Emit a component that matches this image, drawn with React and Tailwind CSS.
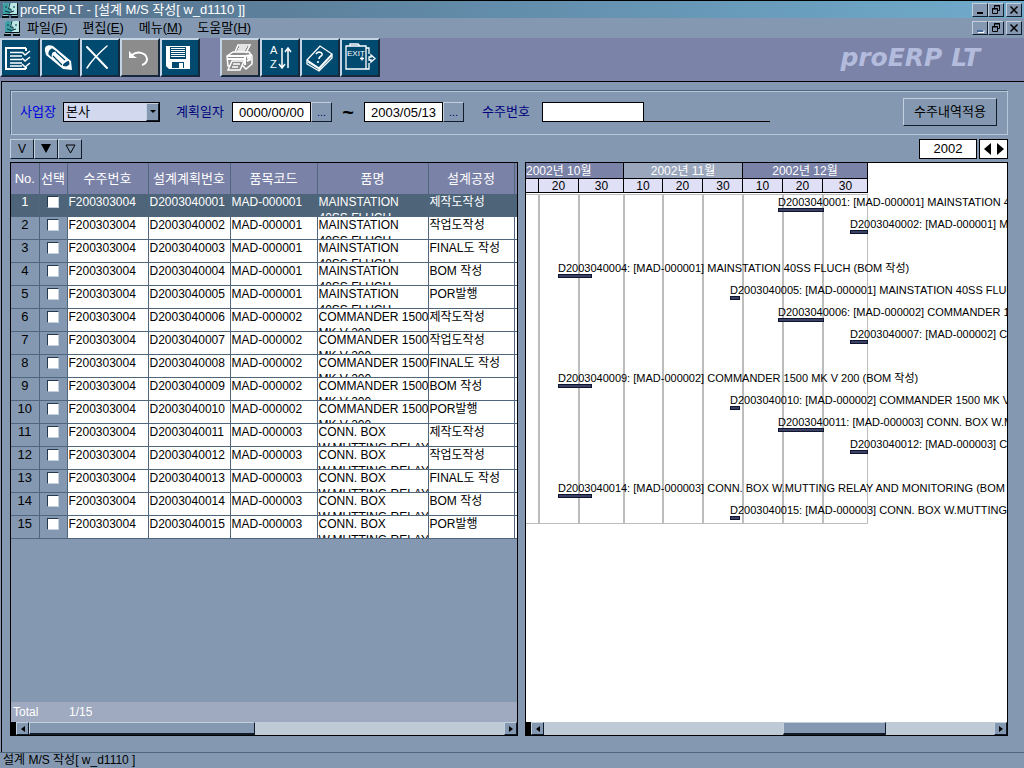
import React from 'react';

const processes = ['제작도작성', '작업도작성', 'FINAL도 작성', 'BOM 작성', 'POR발행'];

const items = [
  { code: 'MAD-000001', name: ['MAINSTATION', '40SS FLUCH'] },
  { code: 'MAD-000002', name: ['COMMANDER 1500', 'MK V 200'] },
  { code: 'MAD-000003', name: ['CONN. BOX', 'W.MUTTING RELAY', 'AND MONITORING'] },
];

// offset and length of a plan bar by process; FINAL has no bar
const bars = [
  { start: 252, width: 46 },
  { start: 324, width: 18 },
  null,
  { start: 32, width: 34 },
  { start: 204, width: 10 },
];

const rows = items.flatMap((item, i) =>
  processes.map((process, j) => {
    const no = i * 5 + j + 1;
    return { no, order: 'F200303004', plan: 'D20030400' + String(no).padStart(2, '0'), ...item, process, bar: bars[j] };
  })
);

const columns = ['No.', '선택', '수주번호', '설계계획번호', '품목코드', '품명', '설계공정'];

const months = [
  { label: '2002년 10월', style: 'w-[98px] bg-[#7a82a8] text-left', days: [['', 'w-[13px]'], ['20', 'w-[40px]'], ['30', 'w-[45px]']] },
  { label: '2002년 11월', style: 'w-[119px] bg-[#9aa6bb] text-center', days: [['10', 'w-[39px]'], ['20', 'w-[40px]'], ['30', 'w-[40px]']] },
  { label: '2002년 12월', style: 'w-[125px] bg-[#7a82a8] text-center', days: [['10', 'w-[40px]'], ['20', 'w-[40px]'], ['30', 'w-[45px]']] },
];

const raised = 'border border-t-[#c3d0de] border-l-[#c3d0de] border-r-[#101c2c] border-b-[#101c2c] bg-[#8499b1]';

// --- Icons ---
const AppIcon = () => (
  <svg width="16" height="16" viewBox="0 0 16 16" className="shrink-0" aria-hidden="true">
    <path d="M1 1h14v11H1z" fill="#b9e6e6" />
    <path d="M1 12V2l1-1h5L6 7h2v5z" fill="#3f9fa6" />
    <path d="M8 1L6.500 7H9v3M4 4v2M12 4v2M3 9q5 3 9 0" fill="none" stroke="#06323b" />
    <path d="M15.500 1v11.500H1" fill="none" stroke="#0b1014" />
    <path d="M0 14h7v2H0zM9 14h7v2H9z" fill="#0b1014" />
    <path d="M1 13.500h5M10 13.500h5" stroke="#8fc9cc" />
  </svg>
);

const icons = {
  list: (
    <g fill="none" stroke="white" strokeWidth="2">
      <path d="M24 8H4v21h20" />
      <path d="M24 8v3M24 27v2" />
      <path d="M8 12.500h12M8 16h12M8 19.500h12M8 23h12M8 26h12" strokeWidth="1.5" />
      <path d="M20 12l3 3 5-4M20 18l3 3 5-4M20 24l3 3 5-4" strokeWidth="1.5" />
    </g>
  ),
  pencil: (
    <g>
      <path d="M3 11c-1-5 3-7 8-5l18 15 1 9-9-1L4 15z" fill="white" />
      <path d="M10 9c-2 1-3 3-3 5l2 2c0-3 1-5 4-5zM14 12l9 8M11 16l9 9" fill="#004a70" stroke="#004a70" strokeWidth="1.3" />
      <path d="M21 26c0-3 2-3 3-4s2-1 3-1l1 6z" fill="#004a70" />
      <path d="M24 27l5 2-1-5z" fill="white" />
    </g>
  ),
  remove: (
    <g fill="none" stroke="white" strokeLinecap="round">
      <path d="M5 7l20 21" strokeWidth="2" />
      <path d="M25 6C17 13 10 20 5 28" strokeWidth="1.5" />
    </g>
  ),
  undo: (
    <g>
      <path d="M10 15c5-4 14-3 15 4 0 3-2 5-5 6" fill="none" stroke="white" strokeWidth="2" />
      <path d="M7 11v7h8l-3-2z" fill="white" />
    </g>
  ),
  save: (
    <g>
      <path d="M4 6h24v23H7l-3-3z" fill="white" />
      <path d="M8 7h16v12H8zM10 22h12v6H10z" fill="#004a70" />
      <path d="M9 8h14v1H9zM9 10h14v1H9zM9 12h14v1H9zM9 14h14v1H9zM9 16h14v1H9zM17 23h4v5h-4z" fill="white" />
    </g>
  ),
  print: (
    <g fill="none" stroke="white" strokeWidth="1.5">
      <path d="M13 12l3-7h12l-4 8M17 7h8M16 9h8M15 11h8" />
      <path d="M5 16l6-4h16l3 4v8l-6 5-3-3H6z" />
      <path d="M5 16h18l7-1M23 16v9M6 19h17M25 18l4-1M25 21l4-2" strokeWidth="2" />
      <path d="M10 21h12l-4 9H6z" fill="#8c8c8c" />
      <path d="M11 24h7M10 27h6" />
    </g>
  ),
  sort: (
    <g fill="none" stroke="white" strokeWidth="1.5">
      <text x="8" y="14" fill="white" stroke="none" fontSize="11" fontFamily="Liberation Sans, sans-serif">A</text>
      <text x="8" y="28" fill="white" stroke="none" fontSize="11" fontFamily="Liberation Sans, sans-serif">Z</text>
      <path d="M20 8v20M17 24l3 4 3-4M26 28V8M23 12l3-4 3 4" />
    </g>
  ),
  help: (
    <g fill="none" stroke="white" strokeWidth="1.3">
      <path d="M5 20L18 6l12 8-13 14zM5 20v4l12 7 13-13v-4M17 28v3M6 22l11 7 12-13" />
      <path d="M14 14c2-3 7-2 6 1-1 2-3 1-3 4M16 21v2" strokeWidth="1.6" />
    </g>
  ),
  exit: (
    <g fill="none" stroke="white" strokeWidth="1.3">
      <path d="M4 6h20v23H4zM8 6V4h8l2 2M24 8h3v6M27 23v6h-3" />
      <text x="5" y="16" fill="white" stroke="none" fontSize="8" fontFamily="Liberation Sans, sans-serif">EXIT</text>
      <path d="M18 18.500h4M20 16.500v4M27 17h2v-2l4 3.500-4 3.500v-2h-2z" />
    </g>
  ),
};

const ToolButton = ({ icon, label, disabled }) => (
  <button
    type="button"
    aria-label={label}
    className={
      'flex h-[39px] w-10 items-center justify-center border-2 border-t-[#c3d4e4] border-l-[#c3d4e4] border-r-[#16283c] border-b-[#16283c] ' +
      (disabled ? 'bg-[#8c8c8c]' : 'bg-[#004a70]')
    }
  >
    <svg width="36" height="35" viewBox="0 0 36 35" aria-hidden="true">{icons[icon]}</svg>
  </button>
);

const WindowButtons = ({ dim }) => (
  <div className="ml-auto flex pr-0.5">
    <button type="button" aria-label="Minimize" className={`flex h-3.5 w-4 items-center justify-center ${raised}`}>
      <svg width="12" height="12" viewBox="0 0 12 12">
        <path d="M3 9h6" stroke={dim ? '#4d6c9a' : 'black'} strokeWidth="2" />
        {dim && <path d="M4 10.500h6v-2" stroke="white" fill="none" />}
      </svg>
    </button>
    <button type="button" aria-label="Restore" className={`flex h-3.5 w-4 items-center justify-center ${raised}`}>
      <svg width="12" height="12" viewBox="0 0 12 12" fill="none" stroke="black">
        <path d="M4.500 4V1.500h5v5H8M4 2h6M2.500 4.500h5v5h-5zM2 5h6" />
      </svg>
    </button>
    <button type="button" aria-label="Close" className={`ml-0.5 flex h-3.5 w-4 items-center justify-center ${raised}`}>
      <svg width="12" height="12" viewBox="0 0 12 12">
        <path d="M2.500 2.500l7 7M9.500 2.500l-7 7" stroke="black" strokeWidth="1.5" />
      </svg>
    </button>
  </div>
);

const ScrollBar = ({ thumb }) => (
  <div className="flex h-[13px] bg-black pl-[5px]">
    <button type="button" aria-label="Scroll left" className={`flex w-[13px] items-center justify-center ${raised}`}>
      <svg width="4" height="6" viewBox="0 0 4 6"><path d="M4 0v6L0 3z" /></svg>
    </button>
    <div className="flex-1 bg-[#bfcad7]">
      <div className={`h-full border-b-2 ${raised} ${thumb}`} />
    </div>
    <button type="button" aria-label="Scroll right" className={`flex w-[13px] items-center justify-center ${raised}`}>
      <svg width="4" height="6" viewBox="0 0 4 6"><path d="M0 0v6l4-3z" /></svg>
    </button>
  </div>
);

const DateField = ({ id, label, value }) => (
  <div className="flex">
    <input id={id} aria-label={label} defaultValue={value} className="h-5 w-[79px] border border-black bg-white text-center text-black" />
    <button type="button" aria-label={label + ' 선택'} className={`h-5 w-[21px] text-[11px] leading-3 ${raised}`}>...</button>
  </div>
);

const Filters = () => (
  <div className="border border-[#4f667d] border-r-[#b4c8da] border-b-[#b4c8da]">
    <div className="flex h-[43px] items-center border-t border-l border-[#b4c8da] pr-2.5 pb-0.5 pl-2 text-[#00007c]">
      <label htmlFor="site" className="w-[43px] text-[#0000e0]">사업장</label>
      <div className="flex h-5 w-[97px] border border-black bg-[#d2d9ef]">
        <select id="site" className="min-w-0 flex-1 appearance-none pl-0.5 leading-4 text-black">
          <option>본사</option>
        </select>
        <span className={`flex w-[13px] items-center justify-center ${raised}`}>
          <svg width="6" height="4" viewBox="0 0 6 4"><path d="M0 0h6L3 3z" /></svg>
        </span>
      </div>
      <label htmlFor="from" className="ml-4 w-14">계획일자</label>
      <DateField id="from" label="계획일자 시작" value="0000/00/00" />
      <span className="w-8 text-center text-xl leading-4 font-bold text-black">~</span>
      <DateField id="to" label="계획일자 종료" value="2003/05/13" />
      <label htmlFor="order" className="ml-[18px] w-[60px]">수주번호</label>
      <input id="order" className="h-5 w-[102px] border border-black bg-white" />
      <div className="h-5 w-[126px] border-b border-black" />
      <button type="button" className={`ml-auto h-7 w-[94px] text-black ${raised}`}>수주내역적용</button>
    </div>
  </div>
);

const PlanTable = () => (
  <section className="flex w-[508px] shrink-0 flex-col border border-black">
    <div className="flex-1">
      <table className="w-full table-fixed border-collapse text-left">
        <colgroup>
          <col className="w-7" />
          <col className="w-7" />
          <col className="w-[81px]" />
          <col className="w-[82px]" />
          <col className="w-[87px]" />
          <col className="w-[111px]" />
          <col className="w-[86px]" />
          <col />
        </colgroup>
        <thead>
          <tr className="h-[31px] bg-[#7a82a8] text-center text-white">
            {columns.map((c) => (
              <th key={c} className="border-r border-[#4f667d] p-0 font-normal whitespace-nowrap">{c}</th>
            ))}
            <th className="p-0" />
          </tr>
        </thead>
        <tbody className="text-xs leading-4">
          {rows.map((r) => {
            const active = r.no === 1;
            const side = 'border-r border-b border-[#4f667d] p-0 align-top ' + (active ? '' : 'bg-[#8499b1]');
            const cell = 'border-r border-b border-[#4f667d] p-0 align-top whitespace-nowrap ' + (active ? '' : 'bg-white');
            return (
              <tr key={r.no} className={active ? 'bg-[#4e6479] text-white' : 'text-black'}>
                <td className={side + ' text-center text-[13px]'}>{r.no}</td>
                <td className={side}>
                  <input
                    type="checkbox"
                    aria-label={r.plan}
                    className="mx-auto mt-0.5 block size-3 appearance-none border border-t-[#26384c] border-r-[#c3d0de] border-b-[#c3d0de] border-l-[#26384c] bg-white"
                  />
                </td>
                <td className={cell + ' pl-px'}>{r.order}</td>
                <td className={cell + ' pl-px'}>{r.plan}</td>
                <td className={cell + ' pl-px'}>{r.code}</td>
                <td className={cell}>
                  <div className="h-[22px] overflow-hidden pl-px">
                    {r.name.map((line) => <div key={line}>{line}</div>)}
                  </div>
                </td>
                <td className={cell + ' pl-px'}>{r.process}</td>
                <td className={active ? 'border-b border-[#4f667d] p-0' : 'border-b border-[#4f667d] bg-white p-0'} />
              </tr>
            );
          })}
        </tbody>
      </table>
    </div>
    <div className="flex h-5 items-center bg-[#9faac0] px-0.5 text-xs text-white">
      <span className="w-14">Total</span>
      <span>1/15</span>
    </div>
    <ScrollBar thumb="w-[226px]" />
  </section>
);

const Gantt = () => (
  <section className="flex min-w-0 flex-1 flex-col overflow-hidden border border-black bg-white">
    <div className="flex">
      {months.map((m) => (
        <div key={m.label} className={`shrink-0 border-r border-b border-black text-xs ${m.style}`}>
          <div className="h-4 border-b border-black leading-4 whitespace-nowrap text-white">{m.label}</div>
          <div className="flex h-[13px] bg-[#dfdff6] text-center leading-[14px]">
            {m.days.map(([day, width]) => (
              <div key={width + day} className={`shrink-0 border-r border-black last:border-r-0 ${width}`}>{day}</div>
            ))}
          </div>
        </div>
      ))}
    </div>
    <div className="grid flex-1 content-start">
      <div className="col-start-1 row-start-1 mt-px flex h-[330px] w-[342px] border-y border-[#bdbdbd] pl-px">
        {months.flatMap((m) =>
          m.days.map(([day, width]) => (
            <div key={m.label + day} className={`shrink-0 border-r-2 border-[#bdbdbd] last:shrink last:border-r ${width}`} />
          ))
        )}
      </div>
      <div className="col-start-1 row-start-1 mt-px overflow-hidden">
        {rows.map((r) => (
          <div key={r.no} className="h-[22px] pt-[3px] text-[11px] leading-[11px] whitespace-nowrap">
            {r.bar && (
              <div style={{ marginLeft: r.bar.start }}>
                <div>{`${r.plan}: [${r.code}] ${r.name.join(' ')} (${r.process})`}</div>
                <div className="h-1 border border-[#10142c] bg-[#3b4268]" style={{ width: r.bar.width }} />
              </div>
            )}
          </div>
        ))}
      </div>
    </div>
    <ScrollBar thumb="ml-[53%] w-[103px]" />
  </section>
);

export default function App() {
  return (
    <div className="flex h-screen flex-col bg-[#8499b1] font-['Liberation_Sans','Noto_Sans_CJK_KR',sans-serif] text-[13px] leading-4 text-black">
      <header>
        <div className="flex h-[18px] items-center border-t border-black bg-linear-to-r from-[#55718b] to-[#70abcc] pl-0.5 text-white">
          <AppIcon />
          <h1 className="ml-0.5">proERP LT - [설계 M/S 작성[ w_d1110 ]]</h1>
          <WindowButtons />
        </div>
        <nav className="flex h-5 items-center bg-[#8499b1] pl-1">
          <AppIcon />
          <div className="ml-[7px] flex gap-[15px]">
            <button type="button">파일(<u>F</u>)</button>
            <button type="button">편집(<u>E</u>)</button>
            <button type="button">메뉴(<u>M</u>)</button>
            <button type="button">도움말(<u>H</u>)</button>
          </div>
          <WindowButtons dim />
        </nav>
        <div className="flex h-[43px] items-start bg-[#7c83a8] pr-11">
          <ToolButton icon="list" label="조회" />
          <ToolButton icon="pencil" label="입력" />
          <ToolButton icon="remove" label="삭제" />
          <ToolButton icon="undo" label="취소" disabled />
          <ToolButton icon="save" label="저장" />
          <div className="w-5" />
          <ToolButton icon="print" label="인쇄" disabled />
          <ToolButton icon="sort" label="정렬" />
          <ToolButton icon="help" label="도움말" />
          <ToolButton icon="exit" label="종료" />
          <div className="ml-auto pt-1 font-['DejaVu_Sans',sans-serif] text-[25px] leading-8 font-bold text-[#b3bcdc] italic">proERP LT</div>
        </div>
      </header>

      <main className="ml-px flex min-h-0 flex-1 flex-col border-t border-l border-black pt-2 pr-4 pb-4 pl-2">
        <Filters />
        <div className="flex h-[27px] items-center">
          <button type="button" aria-label="선택" className={`h-5 w-6 text-xs ${raised}`}>V</button>
          <button type="button" aria-label="전체 펼치기" className={`flex h-5 w-6 items-center justify-center ${raised}`}>
            <svg width="10" height="9" viewBox="0 0 10 9"><path d="M0 0h10L5 9z" /></svg>
          </button>
          <button type="button" aria-label="펼치기" className={`flex h-5 w-6 items-center justify-center ${raised}`}>
            <svg width="11" height="10" viewBox="0 0 11 10"><path d="M1 1h9L5.500 9z" fill="none" stroke="black" /></svg>
          </button>
          <input aria-label="년도" defaultValue="2002" className="ml-auto h-5 w-[58px] border border-black bg-white text-center" />
          <div className="ml-0.5 flex h-5 w-[29px] items-center justify-center gap-1.5 border border-black bg-white">
            <button type="button" aria-label="이전 년도">
              <svg width="7" height="12" viewBox="0 0 7 12"><path d="M7 0v12L0 6z" /></svg>
            </button>
            <button type="button" aria-label="다음 년도">
              <svg width="7" height="12" viewBox="0 0 7 12"><path d="M0 0v12l7-6z" /></svg>
            </button>
          </div>
        </div>
        <div className="flex min-h-0 flex-1 gap-[7px]">
          <PlanTable />
          <Gantt />
        </div>
      </main>

      <footer className="h-4 border-t border-[#4f667d] pl-[3px] text-xs leading-[14px]">설계 M/S 작성[ w_d1110 ]</footer>
    </div>
  );
}
